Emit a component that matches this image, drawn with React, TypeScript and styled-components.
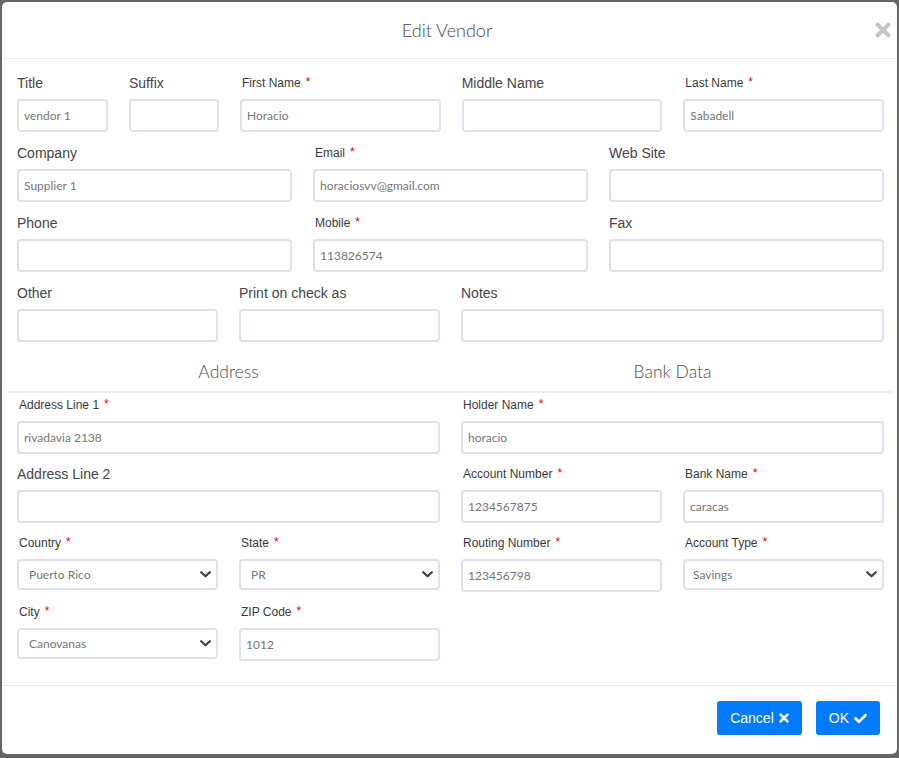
import React from 'react';
import styled, { createGlobalStyle } from 'styled-components';
import { FaTimes, FaCheck } from 'react-icons/fa';

const GlobalStyle = createGlobalStyle`
  html, body { margin: 0; padding: 0; background: #666; }
  body { font-family: "Liberation Sans", Arial, sans-serif; }
  * { box-sizing: border-box; }
`;

const Backdrop = styled.div`
  width: 899px;
  height: 758px;
  padding: 2px 2px 4px 2px;
  background: #666;
`;

const Modal = styled.div`
  width: 895px;
  height: 752px;
  background: #fff;
  border-radius: 5px;
  display: flex;
  flex-direction: column;
  overflow: hidden;
`;

const Header = styled.div`
  height: 57px;
  flex: none;
  display: flex;
  align-items: center;
  padding: 0 6px 0 17px;
  border-bottom: 1px solid #eaeaea;
`;

const Title = styled.h5`
  flex: 1;
  margin: 0;
  text-align: center;
  font-family: Lato, "Liberation Sans", sans-serif;
  font-weight: 300;
  font-size: 18px;
  color: #4a4a4a;
`;

const CloseButton = styled.button`
  width: 16px;
  height: 22px;
  padding: 0;
  border: 0;
  background: none;
  color: #c6c6c6;
  display: flex;
  align-items: center;
  justify-content: center;
`;

const CloseIcon = styled(FaTimes)`
  width: 16px;
  height: 22px;
`;

const Body = styled.div`
  flex: 1;
  padding: 13px 13px 0 15px;
`;

const Stack = styled.div<{ $gap: number }>`
  display: flex;
  flex-direction: column;
  gap: ${(p) => p.$gap}px;
`;

const Row = styled.div<{ $cols: string }>`
  display: grid;
  grid-template-columns: ${(p) => p.$cols};
  column-gap: 21px;
  align-items: start;
`;

const Field = styled.div`
  display: flex;
  flex-direction: column;
  min-width: 0;
`;

const Label = styled.label<{ $required?: boolean }>`
  height: 22px;
  margin-bottom: 5px;
  display: flex;
  align-items: center;
  padding-left: ${(p) => (p.$required ? 2 : 0)}px;
  font-size: ${(p) => (p.$required ? 12 : 14)}px;
  color: ${(p) => (p.$required ? '#3a3a3a' : '#454545')};
  white-space: nowrap;
`;

const Star = styled.span`
  color: #e00000;
  font-size: 12px;
  margin-left: 5px;
  position: relative;
  top: -1px;
`;

const TextInput = styled.input`
  width: 100%;
  height: 33px;
  border: 2px solid #dfe2ee;
  border-radius: 4px;
  padding: 0 5px;
  font-family: Lato, "Liberation Sans", sans-serif;
  font-size: 12px;
  color: #767676;
  background: #fff;
  outline: none;
`;

const SelectWrap = styled.div`
  position: relative;
  margin-bottom: 2px;
`;

const SelectBox = styled.select<{ $pad: number }>`
  width: 100%;
  height: 31px;
  border: 2px solid #dfe2ee;
  border-radius: 4px;
  padding: 0 24px 0 ${(p) => p.$pad}px;
  font-family: Lato, "Liberation Sans", sans-serif;
  font-size: 12px;
  color: #767676;
  background: #fff;
  appearance: none;
  -webkit-appearance: none;
  outline: none;
`;

const Chevron = styled.svg`
  position: absolute;
  right: 7px;
  top: 12px;
  pointer-events: none;
`;

const SectionHeads = styled.div`
  margin: 9px -10px 1px;
  padding: 0 10px;
  display: grid;
  grid-template-columns: 1fr 1fr;
  column-gap: 21px;
  border-bottom: 2px solid #efefef;
`;

const SectionTitle = styled.div`
  height: 40px;
  display: flex;
  align-items: center;
  justify-content: center;
  font-family: Lato, "Liberation Sans", sans-serif;
  font-weight: 300;
  font-size: 17.5px;
  color: #4f4f4f;
`;

const Footer = styled.div`
  flex: none;
  border-top: 1px solid #e6e6e6;
  padding: 15px 17px 19px;
  display: flex;
  justify-content: flex-end;
  gap: 14px;
`;

const Button = styled.button`
  height: 34px;
  padding: 0 13px;
  border: 0;
  border-radius: 3px;
  background: #007bff;
  color: #fff;
  font-family: "Liberation Sans", Arial, sans-serif;
  font-size: 14px;
  display: inline-flex;
  align-items: center;
  gap: 5px;
`;

const CancelIcon = styled(FaTimes)`
  width: 10px;
  height: 14px;
`;

const OkIcon = styled(FaCheck)`
  width: 13px;
  height: 13px;
`;

type FP = { label: string; value?: string; required?: boolean };

const InputField = ({ label, value = '', required }: FP) => (
  <Field>
    <Label $required={required}>
      {label}
      {required && <Star>*</Star>}
    </Label>
    <TextInput defaultValue={value} />
  </Field>
);

const SelectField = ({ label, value = '', required, pad = 11 }: FP & { pad?: number }) => (
  <Field>
    <Label $required={required}>
      {label}
      {required && <Star>*</Star>}
    </Label>
    <SelectWrap>
      <SelectBox $pad={pad} defaultValue={value}>
        <option value={value}>{value}</option>
      </SelectBox>
      <Chevron width="11" height="7" viewBox="0 0 11 7">
        <polyline points="1.2,1.2 5.5,5.3 9.8,1.2" fill="none" stroke="#404040" strokeWidth="2.2" strokeLinecap="round" strokeLinejoin="round" />
      </Chevron>
    </SelectWrap>
  </Field>
);

export default function App() {
  return (
    <>
      <GlobalStyle />
      <Backdrop>
        <Modal>
          <Header>
            <Title>Edit Vendor</Title>
            <CloseButton aria-label="Close">
              <CloseIcon />
            </CloseButton>
          </Header>
          <Body>
            <Stack $gap={10}>
              <Row $cols="91px 90px 1fr 1fr 1fr">
                <InputField label="Title" value="vendor 1" />
                <InputField label="Suffix" />
                <InputField label="First Name" value="Horacio" required />
                <InputField label="Middle Name" />
                <InputField label="Last Name" value="Sabadell" required />
              </Row>
              <Row $cols="1fr 1fr 1fr">
                <InputField label="Company" value="Supplier 1" />
                <InputField label="Email" value="horaciosvv@gmail.com" required />
                <InputField label="Web Site" />
              </Row>
              <Row $cols="1fr 1fr 1fr">
                <InputField label="Phone" />
                <InputField label="Mobile" value="113826574" required />
                <InputField label="Fax" />
              </Row>
              <Row $cols="201px 201px 1fr">
                <InputField label="Other" />
                <InputField label="Print on check as" />
                <InputField label="Notes" />
              </Row>
            </Stack>
            <SectionHeads>
              <SectionTitle>Address</SectionTitle>
              <SectionTitle>Bank Data</SectionTitle>
            </SectionHeads>
            <Row $cols="1fr 1fr">
              <Stack $gap={9}>
                <InputField label="Address Line 1" value="rivadavia 2138" required />
                <InputField label="Address Line 2" />
                <Row $cols="1fr 1fr">
                  <SelectField label="Country" value="Puerto Rico" required pad={10} />
                  <SelectField label="State" value="PR" required pad={10} />
                </Row>
                <Row $cols="1fr 1fr">
                  <SelectField label="City" value="Canovanas" required pad={10} />
                  <InputField label="ZIP Code" value="1012" required />
                </Row>
              </Stack>
              <Stack $gap={9}>
                <InputField label="Holder Name" value="horacio" required />
                <Row $cols="1fr 1fr">
                  <InputField label="Account Number" value="1234567875" required />
                  <InputField label="Bank Name" value="caracas" required />
                </Row>
                <Row $cols="1fr 1fr">
                  <InputField label="Routing Number" value="123456798" required />
                  <SelectField label="Account Type" value="Savings" required pad={8} />
                </Row>
              </Stack>
            </Row>
          </Body>
          <Footer>
            <Button>
              {'Cancel'}
              <CancelIcon />
            </Button>
            <Button>
              {'OK'}
              <OkIcon />
            </Button>
          </Footer>
        </Modal>
      </Backdrop>
    </>
  );
}
